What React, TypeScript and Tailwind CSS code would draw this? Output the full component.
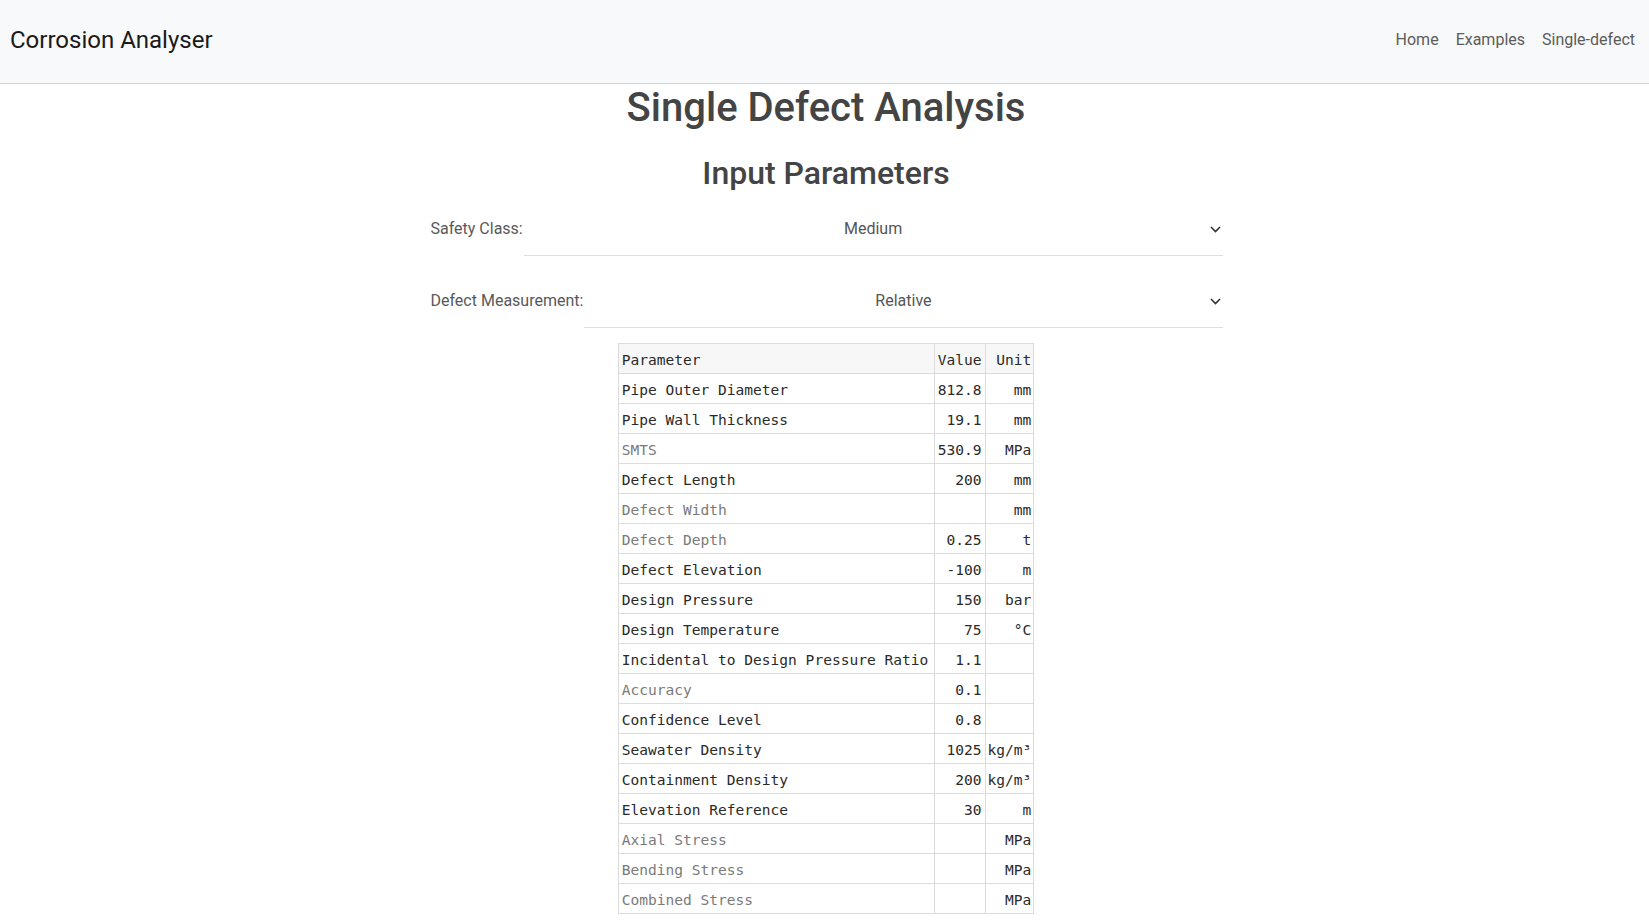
import React from "react";

type Row = { name: string; value: string; unit: string; muted?: boolean };

const rows: Row[] = [
  { name: "Pipe Outer Diameter", value: "812.8", unit: "mm" },
  { name: "Pipe Wall Thickness", value: "19.1", unit: "mm" },
  { name: "SMTS", value: "530.9", unit: "MPa", muted: true },
  { name: "Defect Length", value: "200", unit: "mm" },
  { name: "Defect Width", value: "", unit: "mm", muted: true },
  { name: "Defect Depth", value: "0.25", unit: "t", muted: true },
  { name: "Defect Elevation", value: "-100", unit: "m" },
  { name: "Design Pressure", value: "150", unit: "bar" },
  { name: "Design Temperature", value: "75", unit: "°C" },
  { name: "Incidental to Design Pressure Ratio", value: "1.1", unit: "" },
  { name: "Accuracy", value: "0.1", unit: "", muted: true },
  { name: "Confidence Level", value: "0.8", unit: "" },
  { name: "Seawater Density", value: "1025", unit: "kg/m³" },
  { name: "Containment Density", value: "200", unit: "kg/m³" },
  { name: "Elevation Reference", value: "30", unit: "m" },
  { name: "Axial Stress", value: "", unit: "MPa", muted: true },
  { name: "Bending Stress", value: "", unit: "MPa", muted: true },
  { name: "Combined Stress", value: "", unit: "MPa", muted: true },
];

function Chevron() {
  return (
    <svg width="11" height="7" viewBox="0 0 11 7" className="absolute right-[2px] top-[9px]">
      <polyline points="1,1 5.5,5.5 10,1" fill="none" stroke="#333" strokeWidth="1.6" />
    </svg>
  );
}

function SelectRow({ label, value, className }: { label: string; value: string; className?: string }) {
  return (
    <div className={"flex items-start " + (className ?? "")}>
      <div className="text-[16px] leading-6 text-[#595959] pl-[1px] pr-[1px]">{label}</div>
      <div className="relative flex-1 border-b border-[#dedede] pb-[14px] text-center text-[16px] leading-6 text-[#555]">
        {value}
        <Chevron />
      </div>
    </div>
  );
}

const cell = "border border-[#dcdcdc] pt-[4px] pb-[2px] leading-[23px] whitespace-nowrap";

export default function App() {
  return (
    <div className="min-h-screen bg-white font-['Roboto',sans-serif]">
      <nav className="h-[84px] bg-[#f8f9fa] border-b border-[#d2d2d2] flex items-center justify-between pl-[10px] pr-[14px] pb-[2px]">
        <div className="text-[24px] leading-[29px] text-[#1a1a1a]">Corrosion Analyser</div>
        <div className="mb-[2px] flex items-center gap-[17px] text-[16px] leading-6 text-[#5c5c5c]">
          <span>Home</span>
          <span>Examples</span>
          <span>Single-defect</span>
        </div>
      </nav>
      <main className="pl-[3px] pb-[6px]">
        <h1 className="text-center text-[40px] leading-[48px] font-medium text-[#444]">Single Defect Analysis</h1>
        <h2 className="mt-[22px] text-center text-[32px] leading-[38px] font-medium text-[#444]">Input Parameters</h2>
        <div className="mx-auto w-[793px]">
          <SelectRow label="Safety Class:" value="Medium" className="mt-[25px]" />
          <SelectRow label="Defect Measurement:" value="Relative" className="mt-[33px]" />
        </div>
        <table className="mx-auto mt-[15px] border-collapse font-['DejaVu_Sans_Mono',monospace] text-[14.55px] text-[#2a2a2a]">
          <thead>
            <tr className="bg-[#f7f7f7]">
              <th className={cell + " w-[316px] px-[3px] text-left font-normal"}>Parameter</th>
              <th className={cell + " px-[3px] text-right font-normal"}>Value</th>
              <th className={cell + " pl-[2px] pr-[2px] text-right font-normal"}>Unit</th>
            </tr>
          </thead>
          <tbody>
            {rows.map((r) => (
              <tr key={r.name}>
                <td className={cell + " px-[3px]" + (r.muted ? " text-[#7a7a7a]" : "")}>{r.name}</td>
                <td className={cell + " px-[3px] text-right"}>{r.value}</td>
                <td className={cell + " pl-[2px] pr-[2px] text-right"}>{r.unit}</td>
              </tr>
            ))}
          </tbody>
        </table>
      </main>
    </div>
  );
}
